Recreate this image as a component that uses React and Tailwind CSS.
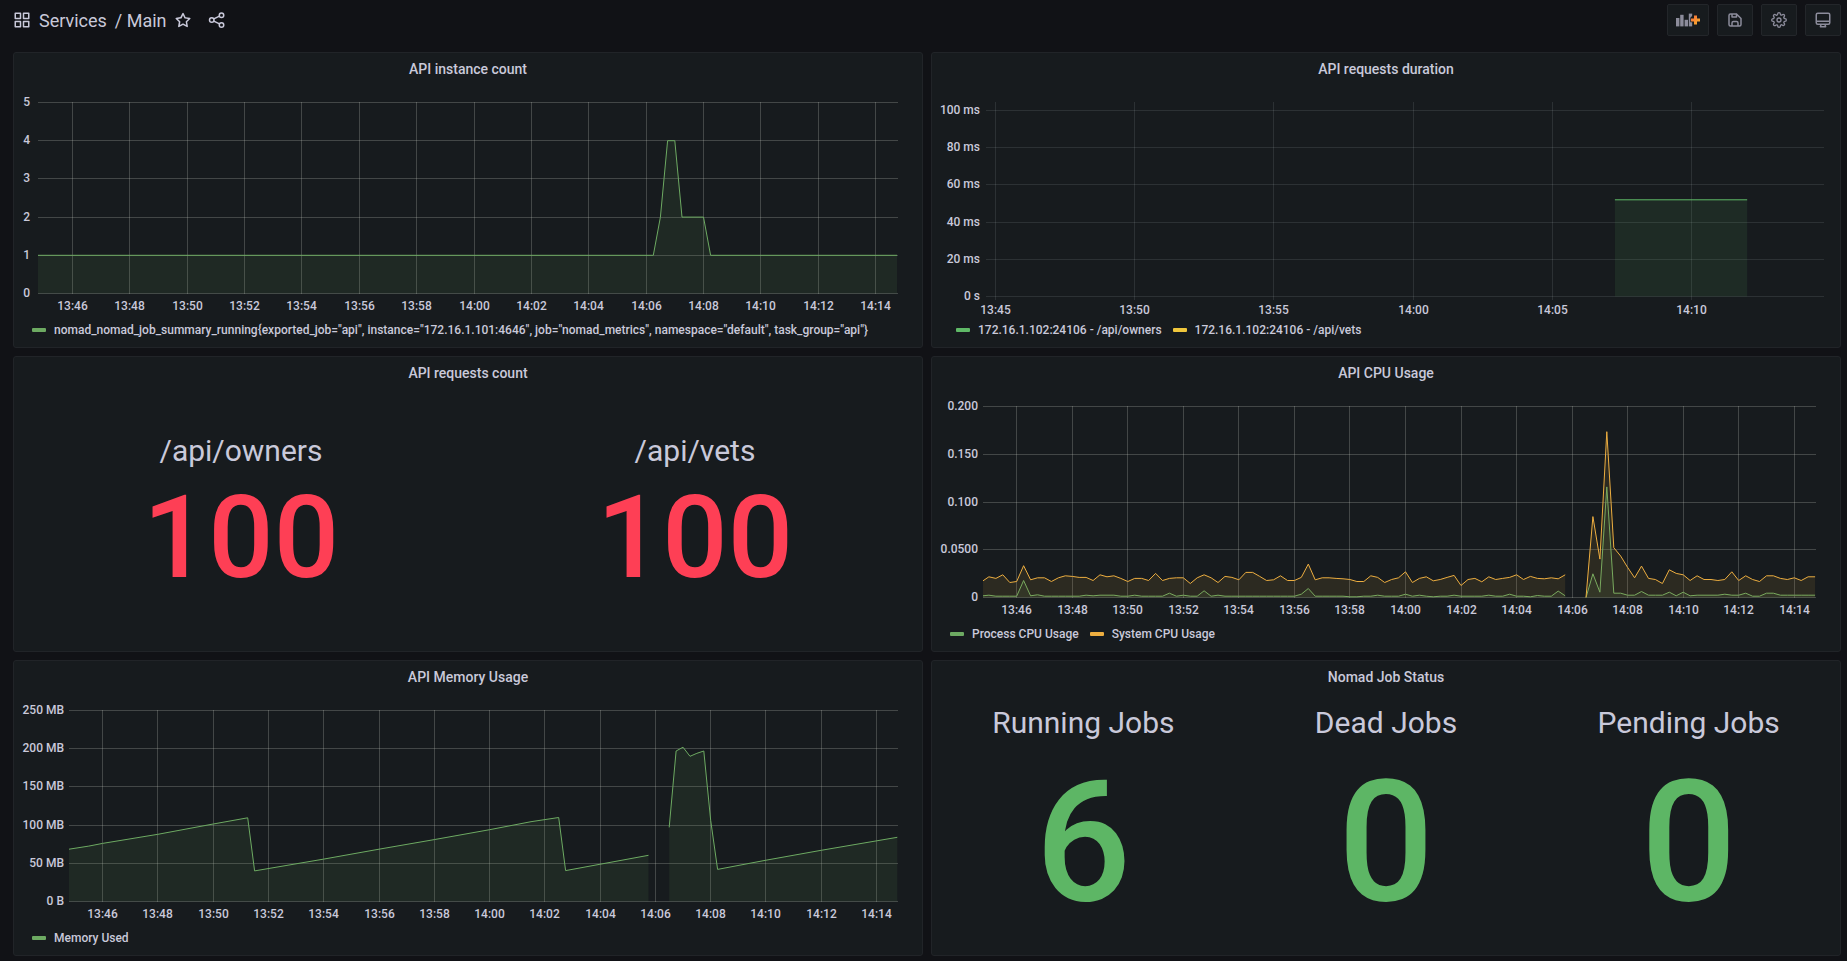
import React from "react";
import { FiSettings } from "react-icons/fi";

const GREEN = "#6daa62";
const BRIGHT_GREEN = "#5fb967";
const ORANGE = "#edae40";

const two = (n) => String(n).padStart(2, "0");
const clock = (minutes) => `${two(Math.floor(minutes / 60))}:${two(minutes % 60)}`;
const snap = (n) => Math.floor(n) + 0.5;

/* Places quarter-minute samples on the time axis, starting at `from` minutes. */
const quarterly = (from, unit, samples) => samples.map((v, i) => [from + i * 0.25, v * unit]);

/* CPU samples are kept in steps of 0.00035. */
const CPU_STEP = 0.00035;

const systemBefore = quarterly(-1.25, CPU_STEP, [
  50, 62, 57, 68, 45, 48, 95, 53, 59, 59, 48, 59, 65, 63, 60, 60, 51, 68, 62, 65, 57,
  48, 57, 57, 51, 72, 51, 57, 59, 59, 42, 59, 68, 59, 45, 63, 60, 53, 75, 75, 63, 51, 53, 65, 51,
  51, 60, 100, 53, 59, 59, 57, 56, 54, 48, 48, 65, 60, 45, 54, 59, 77, 45, 57, 62, 50, 54, 60, 66,
  36, 54, 57, 47, 62, 54, 57, 60, 68, 54, 63, 57, 56, 59, 56, 68,
]);
const systemAfter = quarterly(20.5, CPU_STEP, [
  0, 242, 115, 496, 149, 124, 90, 59, 94, 57, 54, 42, 83, 72, 68, 51, 65, 54, 54, 51, 54, 77, 51,
  65, 54, 48, 65, 65, 57, 54, 59, 51, 62, 62,
]);
const processBefore = quarterly(-1.25, CPU_STEP, [
  5, 7, 4, 4, 4, 4, 51, 5, 8, 4, 4, 4, 4, 4, 4, 7, 5, 7, 7, 7, 4,
  4, 7, 4, 4, 4, 4, 13, 4, 7, 4, 4, 20, 4, 7, 4, 4, 4, 4, 4, 4, 4, 4, 4, 4,
  4, 10, 27, 4, 4, 4, 4, 4, 2, 2, 4, 4, 7, 4, 4, 4, 10, 4, 7, 4, 2, 4, 4, 7,
  4, 4, 4, 4, 7, 4, 4, 10, 4, 4, 2, 6, 4, 4, 19, 5,
]);
const processAfter = quarterly(20.5, CPU_STEP, [
  0, 71, 16, 331, 13, 13, 7, 7, 18, 7, 7, 7, 16, 5, 16, 5, 7, 7, 7, 7, 10, 7, 7,
  13, 4, 4, 13, 13, 7, 7, 7, 7, 7, 7,
]);

const instanceChart = {
  label: "API instance count",
  left: 24,
  right: 884,
  top: 17.5,
  bottom: 208.5,
  gridTop: 17,
  gridBottom: 209,
  max: 5,
  yTicks: [[0, "0"], [1, "1"], [2, "2"], [3, "3"], [4, "4"], [5, "5"]],
  labelRight: 16,
  xStart: 58.5,
  perMinute: 28.68,
  startMinute: 826,
  xEvery: 2,
  xCount: 15,
  xBaseline: 225,
  grid: "rgba(200,205,195,0.25)",
  series: [
    {
      color: GREEN,
      runs: [[[-1.25, 1], [20.25, 1], [20.5, 2], [20.75, 4], [21, 4], [21.25, 2], [22, 2], [22.25, 1], [28.75, 1]]],
    },
  ],
};

const durationChart = {
  label: "API requests duration",
  left: 54,
  right: 892,
  top: 25.5,
  bottom: 211.5,
  gridTop: 17,
  gridBottom: 215,
  max: 100,
  yTicks: [[0, "0 s"], [20, "20 ms"], [40, "40 ms"], [60, "60 ms"], [80, "80 ms"], [100, "100 ms"]],
  labelRight: 48,
  xStart: 63.5,
  perMinute: 27.84,
  startMinute: 825,
  xEvery: 5,
  xCount: 6,
  xBaseline: 229,
  grid: "rgba(240,250,255,0.1)",
  series: [{ color: BRIGHT_GREEN, runs: [[[22.25, 52], [27, 52]]] }],
};

const cpuChart = {
  ...instanceChart,
  label: "API CPU Usage",
  left: 51,
  right: 884,
  max: 0.2,
  yTicks: [[0, "0"], [0.05, "0.0500"], [0.1, "0.100"], [0.15, "0.150"], [0.2, "0.200"]],
  labelRight: 46,
  xStart: 84.7,
  perMinute: 27.77,
  series: [
    { color: GREEN, runs: [processBefore, processAfter] },
    { color: ORANGE, runs: [systemBefore, systemAfter] },
  ],
};

const memoryChart = {
  ...instanceChart,
  label: "API Memory Usage",
  left: 55,
  max: 250,
  yTicks: [[0, "0 B"], [50, "50 MB"], [100, "100 MB"], [150, "150 MB"], [200, "200 MB"], [250, "250 MB"]],
  labelRight: 50,
  xStart: 88.6,
  perMinute: 27.64,
  series: [
    {
      color: GREEN,
      runs: [
        [[-1.25, 68.5], [-0.5, 72.5], [0, 76], [2, 88], [4, 101.5], [5.25, 109.5], [5.5, 40], [8, 55.5], [10, 68.5], [12, 81], [14, 94], [15.5, 104.5], [16.5, 110], [16.75, 40.5], [19.75, 60.5]],
        [[20.5, 97], [20.75, 197], [21, 202], [21.25, 190], [21.5, 194], [21.75, 197], [22, 106], [22.25, 42], [24, 54], [26, 67], [28.75, 84]],
      ],
    },
  ],
};

function TimeChart({ chart }) {
  const c = chart;
  const x = (t) => Math.min(c.right, Math.max(c.left, c.xStart + t * c.perMinute));
  const y = (v) => c.bottom - (v / c.max) * (c.bottom - c.top);
  const ticks = Array.from({ length: c.xCount }, (_, i) => i * c.xEvery);
  const line = (run) => run.map(([t, v]) => `${x(t).toFixed(1)},${y(v).toFixed(1)}`).join(" ");
  return (
    <svg
      viewBox="0 0 908 235"
      className="block h-auto w-full fill-[#c9c9da] font-['Roboto',sans-serif] text-[12px] font-medium"
      role="img"
      aria-label={c.label}
    >
      <g stroke={c.grid} strokeWidth="1">
        {c.yTicks.map(([v]) => (
          <line key={v} x1={c.left} x2={c.right} y1={snap(y(v))} y2={snap(y(v))} />
        ))}
        {ticks.map((t) => (
          <line key={t} x1={snap(x(t))} x2={snap(x(t))} y1={c.gridTop} y2={c.gridBottom} />
        ))}
      </g>
      {c.series.map((s) =>
        s.runs.map((run, i) => (
          <g key={i}>
            <polygon
              points={`${x(run[0][0])},${c.bottom} ${line(run)} ${x(run[run.length - 1][0])},${c.bottom}`}
              fill={s.color}
              fillOpacity="0.1"
            />
            <polyline points={line(run)} fill="none" stroke={s.color} strokeWidth="1" strokeLinejoin="round" />
          </g>
        ))
      )}
      {c.yTicks.map(([v, text]) => (
        <text key={text} x={c.labelRight} y={Math.floor(y(v)) + 4} textAnchor="end">
          {text}
        </text>
      ))}
      {ticks.map((t) => (
        <text key={t} x={snap(x(t))} y={c.xBaseline} textAnchor="middle">
          {clock(c.startMinute + t)}
        </text>
      ))}
    </svg>
  );
}

function Panel({ title, children }) {
  return (
    <section className="flex min-h-[296px] flex-col rounded-[3px] border border-[#212428] bg-[#171b1e]">
      <h2 className="flex h-8 shrink-0 items-center justify-center text-[14px] font-medium">{title}</h2>
      {children}
    </section>
  );
}

function Legend({ items, indent = "pl-[18px]" }) {
  return (
    <ul className={`flex h-5 items-center gap-[11px] whitespace-nowrap text-[12px] font-medium ${indent}`}>
      {items.map(([color, text]) => (
        <li key={text} className="flex items-center gap-2">
          <span className={`h-1 w-[14px] rounded-[1px] ${color}`} />
          {text}
        </li>
      ))}
    </ul>
  );
}

function Stats({ items, columns, valueClass }) {
  return (
    <dl className={`grid flex-1 items-center text-center ${columns}`}>
      {items.map(([name, value]) => (
        <div key={name}>
          <dt className="text-[30px] leading-[1.2]">{name}</dt>
          <dd className={`font-medium leading-[1.2] ${valueClass}`}>{value}</dd>
        </div>
      ))}
    </dl>
  );
}

function ToolButton({ label, width = "w-9", children }) {
  return (
    <button
      type="button"
      aria-label={label}
      className={`flex h-8 items-center justify-center rounded-[2px] border border-[#23262a] bg-[#171b1e] text-[#8c8c9b] ${width}`}
    >
      {children}
    </button>
  );
}

const AppsIcon = () => (
  <svg width="18" height="18" viewBox="0 0 24 24" fill="none" stroke="currentColor" strokeWidth="2" strokeLinejoin="round" aria-hidden="true">
    <rect x="3" y="3" width="7" height="7" />
    <rect x="14" y="3" width="7" height="7" />
    <rect x="3" y="14" width="7" height="7" />
    <rect x="14" y="14" width="7" height="7" />
  </svg>
);

const StarIcon = () => (
  <svg width="18" height="18" viewBox="0 0 24 24" fill="currentColor" aria-hidden="true">
    <path d="M22,9.67A1,1,0,0,0,21.14,9l-5.69-.83L12.9,3a1,1,0,0,0-1.8,0L8.55,8.16,2.86,9a1,1,0,0,0-.81.68,1,1,0,0,0,.25,1l4.13,4-1,5.68A1,1,0,0,0,6.9,21.44L12,18.77l5.1,2.67a.93.93,0,0,0,.46.12,1,1,0,0,0,.59-.19,1,1,0,0,0,.4-1l-1-5.68,4.13-4A1,1,0,0,0,22,9.67Zm-6.15,4a1,1,0,0,0-.29.88l.72,4.2-3.76-2a1.06,1.06,0,0,0-.94,0l-3.76,2,.72-4.2a1,1,0,0,0-.29-.88l-3-3,4.21-.61a1,1,0,0,0,.76-.55L12,5.7l1.88,3.82a1,1,0,0,0,.76.55l4.21.61Z" />
  </svg>
);

const ShareIcon = () => (
  <svg width="18" height="18" viewBox="0 0 24 24" fill="none" stroke="currentColor" strokeWidth="2" aria-hidden="true">
    <circle cx="5" cy="12" r="3" />
    <circle cx="18" cy="5.5" r="3" />
    <circle cx="18" cy="18.5" r="3" />
    <path d="M7.7 10.6l7.6-3.8M7.7 13.4l7.6 3.8" />
  </svg>
);

const AddPanelIcon = () => (
  <svg width="24" height="14" viewBox="0 0 24 14" aria-hidden="true">
    <defs>
      <linearGradient id="plus-fill" x1="0" y1="0" x2="1" y2="1">
        <stop offset="0" stopColor="#f6683a" />
        <stop offset="1" stopColor="#f9b62c" />
      </linearGradient>
    </defs>
    <g fill="currentColor">
      <rect x="0" y="5" width="3.4" height="8.4" />
      <rect x="4.2" y="1.8" width="3.4" height="11.6" />
      <rect x="8.6" y="6.8" width="3.4" height="6.6" />
      <rect x="12.8" y="0.6" width="3.4" height="12.8" />
    </g>
    <path d="M17.3 1.8h4.4v3h3v4.4h-3v3h-4.4v-3h-3V4.8z" fill="#171b1e" />
    <path d="M18 2.6h3v3h3v3h-3v3h-3v-3h-3v-3h3z" fill="url(#plus-fill)" />
  </svg>
);

const SaveIcon = () => (
  <svg width="18" height="18" viewBox="0 0 24 24" fill="currentColor" aria-hidden="true">
    <path d="M20.71,9.29l-6-6a1,1,0,0,0-.32-.21A1.09,1.09,0,0,0,14,3H6A3,3,0,0,0,3,6V18a3,3,0,0,0,3,3H18a3,3,0,0,0,3-3V10A1,1,0,0,0,20.71,9.29ZM9,5h4V7H9Zm6,14H9V16a1,1,0,0,1,1-1h4a1,1,0,0,1,1,1Zm4-1a1,1,0,0,1-1,1H17V16a3,3,0,0,0-3-3H10a3,3,0,0,0-3,3v3H6a1,1,0,0,1-1-1V6A1,1,0,0,1,6,5H7V8A1,1,0,0,0,8,9h6a1,1,0,0,0,1-1V6.41l4,4Z" />
  </svg>
);

const MonitorIcon = () => (
  <svg width="18" height="18" viewBox="0 0 24 24" fill="none" stroke="currentColor" strokeWidth="2" strokeLinejoin="round" aria-hidden="true">
    <rect x="3" y="3" width="18" height="14.5" rx="2" />
    <path d="M3 13.5h18M9.5 17.5l-1 3.5h7l-1-3.5" />
  </svg>
);

export default function App() {
  return (
    <div className="min-h-screen bg-[#111216] pb-[5px] pl-[13px] pr-[6px] font-['Roboto',sans-serif] text-[#c9c9da]">
      <header className="flex h-[52px] items-start justify-between pt-1">
        <nav className="flex h-8 items-center text-[18px]" aria-label="Dashboard">
          <AppsIcon />
          <a href="#services" className="ml-2">Services</a>
          <a href="#main" className="ml-2">/ Main</a>
          <button type="button" aria-label="Mark as favorite" className="ml-[7px]">
            <StarIcon />
          </button>
          <button type="button" aria-label="Share dashboard" className="ml-4">
            <ShareIcon />
          </button>
        </nav>
        <div className="flex gap-2">
          <ToolButton label="Add panel" width="w-[42px]">
            <AddPanelIcon />
          </ToolButton>
          <ToolButton label="Save dashboard">
            <SaveIcon />
          </ToolButton>
          <ToolButton label="Dashboard settings">
            <FiSettings size={16} />
          </ToolButton>
          <ToolButton label="Cycle view mode">
            <MonitorIcon />
          </ToolButton>
        </div>
      </header>

      <main className="grid grid-cols-2 gap-2">
        <Panel title="API instance count">
          <TimeChart chart={instanceChart} />
          <Legend
            items={[
              [
                "bg-[#6daa62]",
                'nomad_nomad_job_summary_running{exported_job="api", instance="172.16.1.101:4646", job="nomad_metrics", namespace="default", task_group="api"}',
              ],
            ]}
          />
        </Panel>

        <Panel title="API requests duration">
          <TimeChart chart={durationChart} />
          <Legend
            indent="pl-6"
            items={[
              ["bg-[#5fb967]", "172.16.1.102:24106 - /api/owners"],
              ["bg-[#efc63c]", "172.16.1.102:24106 - /api/vets"],
            ]}
          />
        </Panel>

        <Panel title="API requests count">
          <Stats
            columns="grid-cols-2"
            valueClass="text-[115px] text-[#fe3f55]"
            items={[["/api/owners", "100"], ["/api/vets", "100"]]}
          />
        </Panel>

        <Panel title="API CPU Usage">
          <TimeChart chart={cpuChart} />
          <Legend
            items={[
              ["bg-[#6daa62]", "Process CPU Usage"],
              ["bg-[#edae40]", "System CPU Usage"],
            ]}
          />
        </Panel>

        <Panel title="API Memory Usage">
          <TimeChart chart={memoryChart} />
          <Legend items={[["bg-[#6daa62]", "Memory Used"]]} />
        </Panel>

        <Panel title="Nomad Job Status">
          <Stats
            columns="grid-cols-3"
            valueClass="text-[169px] text-[#5db665]"
            items={[["Running Jobs", "6"], ["Dead Jobs", "0"], ["Pending Jobs", "0"]]}
          />
        </Panel>
      </main>
    </div>
  );
}
